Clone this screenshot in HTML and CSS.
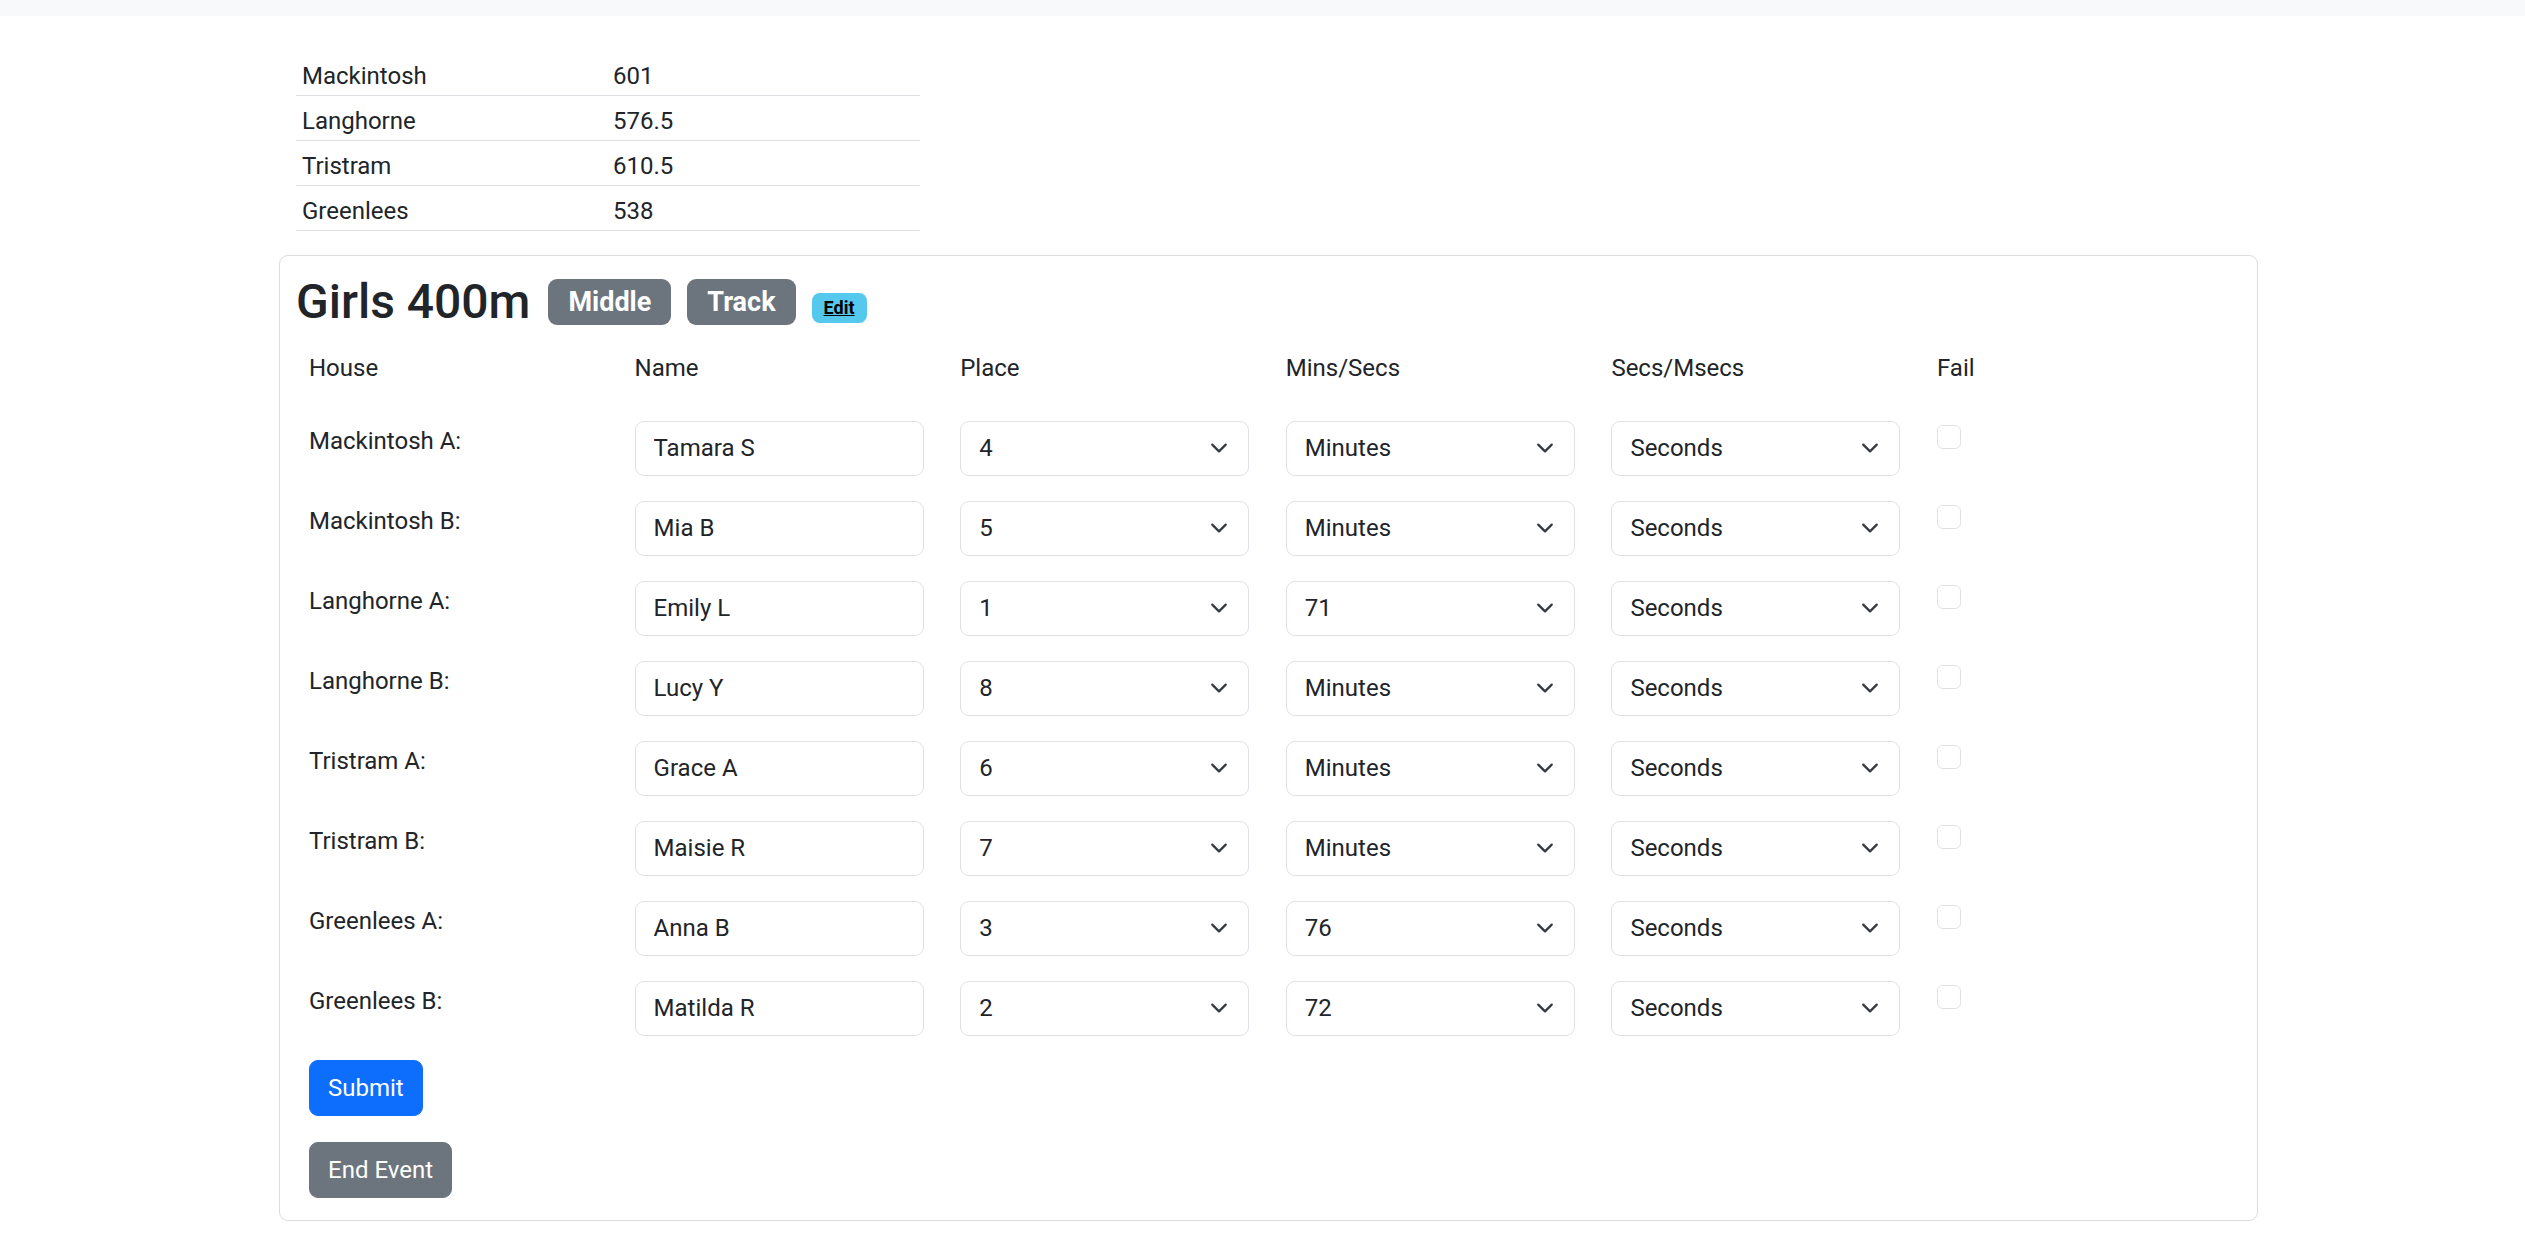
FILE: index.html
```html
<!DOCTYPE html>
<html lang="en">
<head>
<meta charset="utf-8">
<title>Girls 400m</title>
<link rel="stylesheet" href="styles.css">
</head>
<body>
<div class="topbar"></div>
<main class="page">
  <table class="scores">
    <tbody>
      <tr><td>Mackintosh</td><td>601</td></tr>
      <tr><td>Langhorne</td><td>576.5</td></tr>
      <tr><td>Tristram</td><td>610.5</td></tr>
      <tr><td>Greenlees</td><td>538</td></tr>
    </tbody>
  </table>

  <section class="card">
    <div class="card-head">
      <h2 class="title">Girls 400m</h2>
      <span class="badge">Middle</span>
      <span class="badge">Track</span>
      <a class="edit" href="#">Edit</a>
    </div>

    <form class="entries">
      <div class="grid head">
        <span>House</span><span>Name</span><span>Place</span><span>Mins/Secs</span><span>Secs/Msecs</span><span>Fail</span>
      </div>

      <div class="rows">
        <div class="grid row">
          <span class="house">Mackintosh A:</span>
          <input class="field" type="text" value="Tamara S">
          <div class="select"><select class="field"><option>4</option></select><svg class="chev" viewBox="0 0 16 16"><path d="m2 5 6 6 6-6"/></svg></div>
          <div class="select"><select class="field"><option>Minutes</option></select><svg class="chev" viewBox="0 0 16 16"><path d="m2 5 6 6 6-6"/></svg></div>
          <div class="select"><select class="field"><option>Seconds</option></select><svg class="chev" viewBox="0 0 16 16"><path d="m2 5 6 6 6-6"/></svg></div>
          <input class="check" type="checkbox">
        </div>
        <div class="grid row">
          <span class="house">Mackintosh B:</span>
          <input class="field" type="text" value="Mia B">
          <div class="select"><select class="field"><option>5</option></select><svg class="chev" viewBox="0 0 16 16"><path d="m2 5 6 6 6-6"/></svg></div>
          <div class="select"><select class="field"><option>Minutes</option></select><svg class="chev" viewBox="0 0 16 16"><path d="m2 5 6 6 6-6"/></svg></div>
          <div class="select"><select class="field"><option>Seconds</option></select><svg class="chev" viewBox="0 0 16 16"><path d="m2 5 6 6 6-6"/></svg></div>
          <input class="check" type="checkbox">
        </div>
        <div class="grid row">
          <span class="house">Langhorne A:</span>
          <input class="field" type="text" value="Emily L">
          <div class="select"><select class="field"><option>1</option></select><svg class="chev" viewBox="0 0 16 16"><path d="m2 5 6 6 6-6"/></svg></div>
          <div class="select"><select class="field"><option>71</option></select><svg class="chev" viewBox="0 0 16 16"><path d="m2 5 6 6 6-6"/></svg></div>
          <div class="select"><select class="field"><option>Seconds</option></select><svg class="chev" viewBox="0 0 16 16"><path d="m2 5 6 6 6-6"/></svg></div>
          <input class="check" type="checkbox">
        </div>
        <div class="grid row">
          <span class="house">Langhorne B:</span>
          <input class="field" type="text" value="Lucy Y">
          <div class="select"><select class="field"><option>8</option></select><svg class="chev" viewBox="0 0 16 16"><path d="m2 5 6 6 6-6"/></svg></div>
          <div class="select"><select class="field"><option>Minutes</option></select><svg class="chev" viewBox="0 0 16 16"><path d="m2 5 6 6 6-6"/></svg></div>
          <div class="select"><select class="field"><option>Seconds</option></select><svg class="chev" viewBox="0 0 16 16"><path d="m2 5 6 6 6-6"/></svg></div>
          <input class="check" type="checkbox">
        </div>
        <div class="grid row">
          <span class="house">Tristram A:</span>
          <input class="field" type="text" value="Grace A">
          <div class="select"><select class="field"><option>6</option></select><svg class="chev" viewBox="0 0 16 16"><path d="m2 5 6 6 6-6"/></svg></div>
          <div class="select"><select class="field"><option>Minutes</option></select><svg class="chev" viewBox="0 0 16 16"><path d="m2 5 6 6 6-6"/></svg></div>
          <div class="select"><select class="field"><option>Seconds</option></select><svg class="chev" viewBox="0 0 16 16"><path d="m2 5 6 6 6-6"/></svg></div>
          <input class="check" type="checkbox">
        </div>
        <div class="grid row">
          <span class="house">Tristram B:</span>
          <input class="field" type="text" value="Maisie R">
          <div class="select"><select class="field"><option>7</option></select><svg class="chev" viewBox="0 0 16 16"><path d="m2 5 6 6 6-6"/></svg></div>
          <div class="select"><select class="field"><option>Minutes</option></select><svg class="chev" viewBox="0 0 16 16"><path d="m2 5 6 6 6-6"/></svg></div>
          <div class="select"><select class="field"><option>Seconds</option></select><svg class="chev" viewBox="0 0 16 16"><path d="m2 5 6 6 6-6"/></svg></div>
          <input class="check" type="checkbox">
        </div>
        <div class="grid row">
          <span class="house">Greenlees A:</span>
          <input class="field" type="text" value="Anna B">
          <div class="select"><select class="field"><option>3</option></select><svg class="chev" viewBox="0 0 16 16"><path d="m2 5 6 6 6-6"/></svg></div>
          <div class="select"><select class="field"><option>76</option></select><svg class="chev" viewBox="0 0 16 16"><path d="m2 5 6 6 6-6"/></svg></div>
          <div class="select"><select class="field"><option>Seconds</option></select><svg class="chev" viewBox="0 0 16 16"><path d="m2 5 6 6 6-6"/></svg></div>
          <input class="check" type="checkbox">
        </div>
        <div class="grid row">
          <span class="house">Greenlees B:</span>
          <input class="field" type="text" value="Matilda R">
          <div class="select"><select class="field"><option>2</option></select><svg class="chev" viewBox="0 0 16 16"><path d="m2 5 6 6 6-6"/></svg></div>
          <div class="select"><select class="field"><option>72</option></select><svg class="chev" viewBox="0 0 16 16"><path d="m2 5 6 6 6-6"/></svg></div>
          <div class="select"><select class="field"><option>Seconds</option></select><svg class="chev" viewBox="0 0 16 16"><path d="m2 5 6 6 6-6"/></svg></div>
          <input class="check" type="checkbox">
        </div>
      </div>

      <div class="actions">
        <button class="btn btn-primary" type="button">Submit</button>
        <button class="btn btn-secondary" type="button">End Event</button>
      </div>
    </form>
  </section>
</main>
</body>
</html>
```

FILE: styles.css
```css
* {
  box-sizing: border-box;
}

body {
  margin: 0;
  font-family: Roboto, "Liberation Sans", sans-serif;
  font-size: 24px;
  line-height: 36px;
  color: #212529;
  background: #fff;
}

.topbar {
  height: 16px;
  background: #f8f9fa;
}

.page {
  width: 1979px;
  margin: 35px 0 0 279px;
}

/* score table */
.scores {
  border-collapse: collapse;
  width: 624px;
  margin: 0 0 24px 17px;
}

.scores td {
  padding: 7px 6px 1px;
  line-height: 36px;
  border-bottom: 1px solid #dee2e6;
  color: #212529;
}

.scores td:first-child {
  width: 311px;
}

/* card */
.card {
  border: 1px solid #dcdcdc;
  border-radius: 9px;
  padding: 13px 16px 22px 16px;
}

.card-head {
  display: flex;
  align-items: flex-start;
}

.title {
  margin: 4px 18px 0 0;
  font-size: 48px;
  line-height: 57.6px;
  font-weight: 500;
  color: #212529;
}

.badge {
  display: inline-block;
  margin: 10px 16px 0 0;
  font-size: 27px;
  font-weight: 700;
  line-height: 1;
  padding: 9.5px 20px;
  color: #fff;
  background: #6c757d;
  border-radius: 9px;
}

.edit {
  display: inline-block;
  margin-top: 24px;
  font-size: 18px;
  font-weight: 700;
  line-height: 1;
  padding: 6px 12px;
  color: #000;
  background: #55c8ee;
  border-radius: 8px;
  text-decoration: underline;
}

/* form */
.entries {
  padding-left: 13px;
}

.grid {
  display: grid;
  grid-template-columns: repeat(6, 289px);
  column-gap: 36.6px;
  align-items: start;
}

.head {
  margin-top: 16px;
  margin-bottom: 35px;
  padding-top: 3px;
}

.rows {
  display: flex;
  flex-direction: column;
  gap: 25px;
}

.house {
  padding-top: 2px;
}

.field {
  display: block;
  width: 289px;
  height: 55px;
  margin: 0;
  padding: 0 18px;
  font-family: inherit;
  font-size: 24px;
  color: #212529;
  background: #fff;
  border: 1px solid #dee2e6;
  border-radius: 9px;
  appearance: none;
  -webkit-appearance: none;
  outline: none;
}

.select {
  position: relative;
  width: 289px;
}

.chev {
  position: absolute;
  right: 21px;
  top: 50%;
  width: 18px;
  height: 18px;
  transform: translateY(-50%);
  pointer-events: none;
  fill: none;
  stroke: #343a40;
  stroke-width: 2;
  stroke-linecap: round;
  stroke-linejoin: round;
}

.check {
  appearance: none;
  -webkit-appearance: none;
  width: 24px;
  height: 24px;
  margin: 4px 0 0 0;
  border: 1px solid #dee2e6;
  border-radius: 6px;
  background: #fff;
}

.actions {
  display: flex;
  flex-direction: column;
  align-items: flex-start;
  gap: 26px;
  margin-top: 24px;
}

.btn {
  font-family: inherit;
  font-size: 24px;
  line-height: 36px;
  padding: 9px 18px;
  border: 1px solid transparent;
  border-radius: 9px;
  color: #fff;
  cursor: pointer;
}

.btn-primary {
  background: #0d6efd;
  border-color: #0d6efd;
}

.btn-secondary {
  background: #6c757d;
  border-color: #6c757d;
}
```
